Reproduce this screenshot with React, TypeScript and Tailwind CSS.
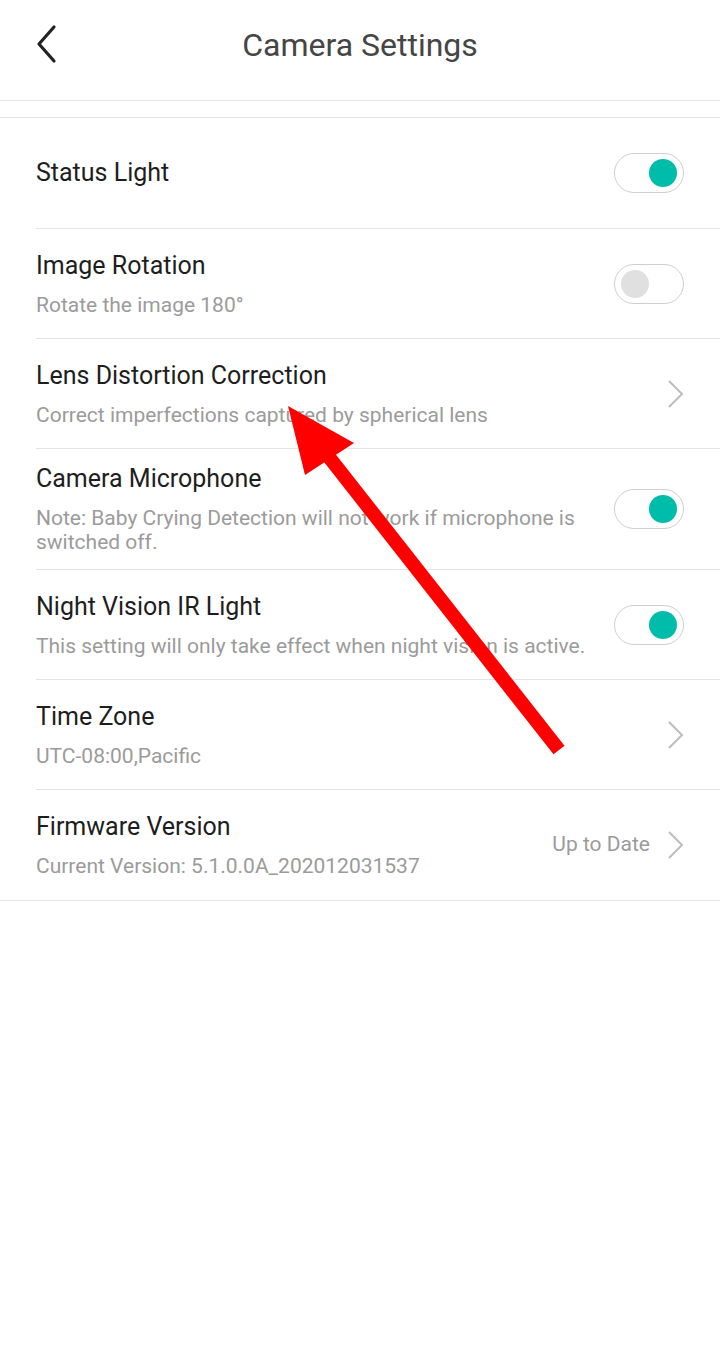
import React from "react";

type Row = {
  title: string;
  sub?: string;
  kind: "toggle" | "link";
  on?: boolean;
  value?: string;
  tall?: boolean;
};

const rows: Row[] = [
  { title: "Status Light", kind: "toggle", on: true },
  { title: "Image Rotation", sub: "Rotate the image 180°", kind: "toggle", on: false },
  { title: "Lens Distortion Correction", sub: "Correct imperfections captured by spherical lens", kind: "link" },
  {
    title: "Camera Microphone",
    sub: "Note: Baby Crying Detection will not work if microphone is switched off.",
    kind: "toggle",
    on: true,
    tall: true,
  },
  { title: "Night Vision IR Light", sub: "This setting will only take effect when night vision is active.", kind: "toggle", on: true },
  { title: "Time Zone", sub: "UTC-08:00,Pacific", kind: "link" },
  { title: "Firmware Version", sub: "Current Version: 5.1.0.0A_202012031537", kind: "link", value: "Up to Date" },
];

function Toggle({ on }: { on: boolean }) {
  return (
    <div className={"flex h-[40px] w-[70px] shrink-0 items-center rounded-full border border-[#cfcfcf] bg-white px-[6px] " + (on ? "justify-end" : "justify-start")}>
      <div className={"h-[28px] w-[28px] rounded-full " + (on ? "bg-[#00bcaa]" : "bg-[#e0e0e0]")} />
    </div>
  );
}

function Chevron() {
  return (
    <svg width="18" height="30" viewBox="0 0 18 30" className="shrink-0">
      <polyline points="3,2 16,15 3,28" fill="none" stroke="#bdbdbd" strokeWidth="2" />
    </svg>
  );
}

export default function App() {
  return (
    <div className="relative min-h-[1368px] w-full bg-white" style={{ fontFamily: "Roboto, 'Noto Sans', sans-serif" }}>
      <div className="h-[101px] border-b border-[#e3e3e3]">
        <div className="relative flex h-[90px] items-center justify-center">
          <svg width="30" height="44" viewBox="0 0 30 44" className="absolute left-[30px] top-[23px]">
            <polyline points="24,4 9,21 24,38" fill="none" stroke="#222" strokeWidth="3.2" strokeLinecap="round" strokeLinejoin="round" />
          </svg>
          <span className="text-[32px] text-[#454545]">Camera Settings</span>
        </div>
      </div>
      <div className="h-[17px] border-b border-[#e3e3e3]" />

      {rows.map((r, i) => {
        const last = i === rows.length - 1;
        const h = r.tall ? "h-[121px] " : i === 0 ? "h-[111px] " : "h-[110px] ";
        return (
          <div key={r.title} className={"pl-[36px] " + (last ? "border-b border-[#e3e3e3]" : "")}>
            <div className={"flex items-center pr-[36px] " + h + (last ? "" : "border-b border-[#e3e3e3]")}>
              <div className="flex min-w-0 flex-1 flex-col pr-[20px]">
                <div className="text-[25px] leading-[30px] text-[#1e1e1e]">{r.title}</div>
                {r.sub && <div className="mt-[12px] text-[21px] leading-[24px] text-[#9b9b9b]">{r.sub}</div>}
              </div>
              {r.kind === "toggle" ? (
                <Toggle on={!!r.on} />
              ) : (
                <div className="flex items-center gap-[16px]">
                  {r.value && <span className="text-[21px] text-[#9b9b9b]">{r.value}</span>}
                  <Chevron />
                </div>
              )}
            </div>
          </div>
        );
      })}

      {/* red annotation arrow */}
      <svg className="pointer-events-none absolute left-0 top-0" width="720" height="1368" viewBox="0 0 720 1368">
        <line x1="559" y1="750" x2="325" y2="452" stroke="#ff0000" strokeWidth="14" />
        <polygon points="288,406 305,475 354,443" fill="#ff0000" />
      </svg>
    </div>
  );
}
